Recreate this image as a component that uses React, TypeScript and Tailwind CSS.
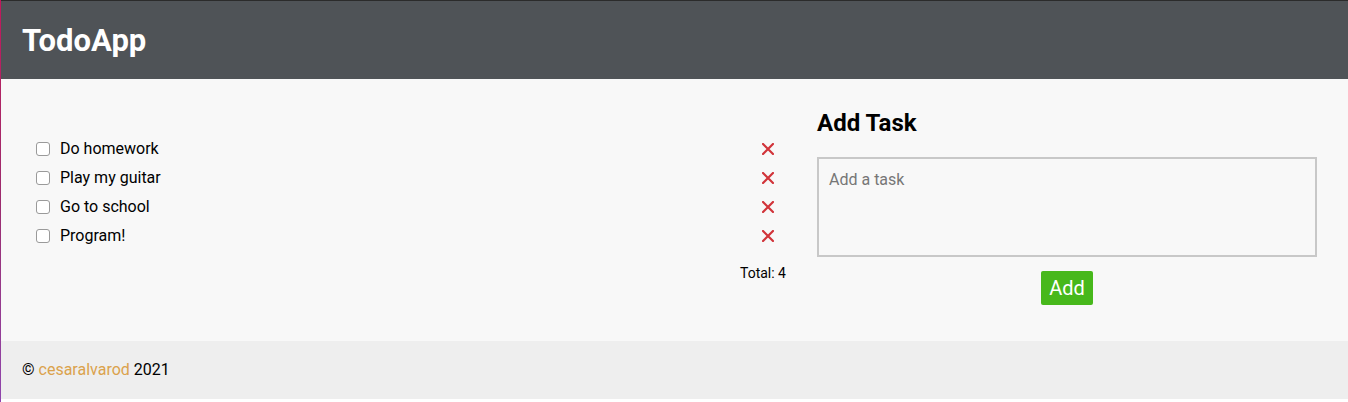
import React from "react";

const tasks = ["Do homework", "Play my guitar", "Go to school", "Program!"];

// Small red cross used to delete a task
const DeleteIcon = () => (
    <svg width="12" height="12" viewBox="0 0 12 12" className="block">
        <path d="M1 1 L11 11 M11 1 L1 11" stroke="#d1343a" strokeWidth="2.2" strokeLinecap="square" />
    </svg>
);

export default function App() {
    return (
        <div className="flex w-[1348px] h-[402px] bg-white font-['Roboto',sans-serif] text-black">
            {/* thin coloured strip on the left edge */}
            <div className="w-px h-full bg-gradient-to-b from-[#c2185b] via-[#9c2b6e] to-[#8e44ad]"></div>

            <div className="flex flex-col flex-1">
                {/* Header */}
                <header className="h-[79px] border-t border-[#2b2b2b] bg-[#4f5357] flex items-center px-[21px]">
                    <h1 className="text-[31px] font-bold text-white leading-none">TodoApp</h1>
                </header>

                {/* Main content */}
                <main className="h-[262px] bg-[#f8f8f8] flex pl-[35px] pr-[31px]">
                    {/* Task list */}
                    <section className="w-[751px] pt-[55px]">
                        <ul className="flex flex-col">
                            {tasks.map((task) => (
                                <li key={task} className="h-[29px] flex items-center pr-[13px]">
                                    <input
                                        type="checkbox"
                                        className="appearance-none w-[14px] h-[14px] m-0 border border-[#9a9a9a] rounded-[3px] bg-white"
                                    />
                                    <span className="ml-[10px] text-base flex-1">{task}</span>
                                    <DeleteIcon />
                                </li>
                            ))}
                        </ul>
                        <div className="text-right text-sm mt-[13px] pr-[1px]">Total: 4</div>
                    </section>

                    {/* Add task form */}
                    <section className="w-[500px] ml-[30px] pt-[28px] flex flex-col">
                        <h2 className="text-[24px] font-bold leading-[32px]">Add Task</h2>
                        <textarea
                            placeholder="Add a task"
                            className="mt-[18px] w-[500px] h-[100px] border-2 border-[#c8c8c8] bg-[#f8f8f8] px-[10px] py-[9px] text-base placeholder:text-[#767676] resize-none outline-none"
                        ></textarea>
                        <div className="flex justify-center mt-[14px]">
                            <button className="w-[52px] h-[34px] bg-[#47b81b] text-white text-[20px] rounded-[2px] leading-none">Add</button>
                        </div>
                    </section>
                </main>

                {/* Footer */}
                <footer className="h-[58px] bg-[#eeeeee] flex items-center px-[21px] text-base">
                    <span>
                        © <a className="text-[#dba24c]">cesaralvarod</a> 2021
                    </span>
                </footer>
            </div>
        </div>
    );
}
